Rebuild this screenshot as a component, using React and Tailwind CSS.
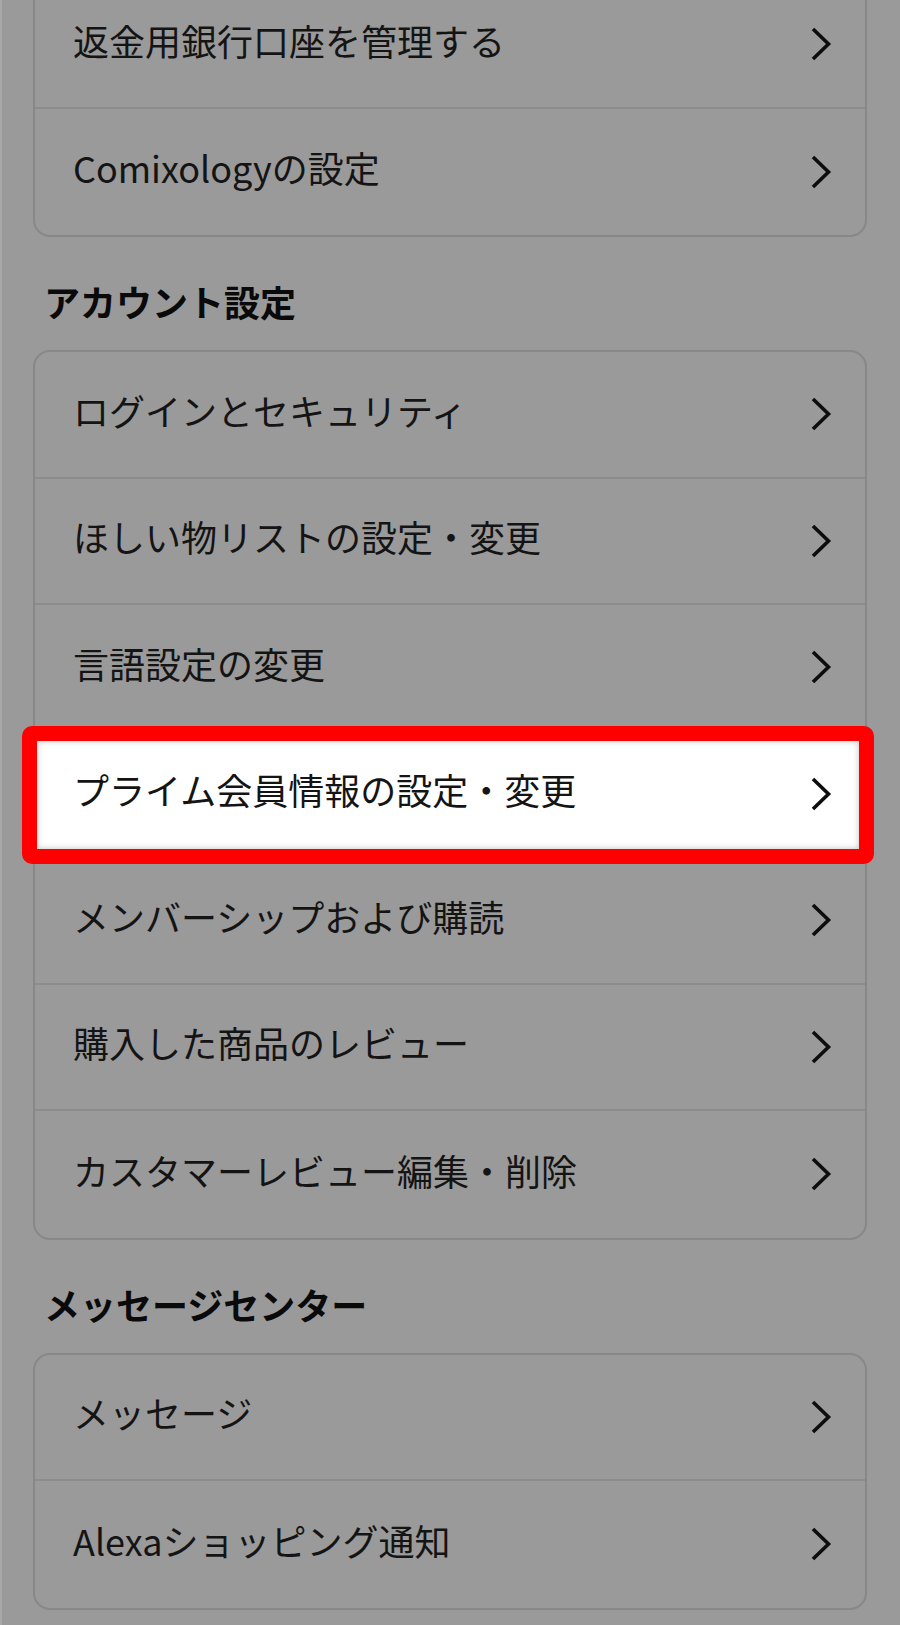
const font = { fontFamily: '"Noto Sans CJK JP", "Noto Sans", sans-serif' };

function Chevron() {
  return (
    <svg width="24" height="38" viewBox="0 0 24 38" className="text-[#0d0d0d]">
      <polyline
        points="4,4 19.5,19 4,34"
        fill="none"
        stroke="currentColor"
        strokeWidth="3.6"
        strokeLinejoin="miter"
      />
    </svg>
  );
}

function Row({ label, last, highlight }) {
  return (
    <div
      className={`relative flex items-center justify-between h-[126.5px] pl-[38px] pr-[32px] ${
        last ? "" : "border-b-2 border-[#8c8c8c]"
      } ${highlight ? "bg-white" : ""}`}
    >
      <span className="mb-[9px] text-[36px] leading-[36px] text-[#141414]">{label}</span>
      <Chevron />
      {highlight && (
        <div className="absolute -top-[6px] -bottom-[8px] -left-[13px] -right-[9px] rounded-[10px] border-[15px] border-[#ff0000] shadow-[inset_0_0_6px_rgba(0,0,0,0.25)]" />
      )}
    </div>
  );
}

function Card({ items, highlightIndex, className = "" }) {
  return (
    <div className={`border-2 border-[#888888] rounded-[17px] ${className}`}>
      {items.map((item, i) => (
        <Row
          key={item}
          label={item}
          last={i === items.length - 1}
          highlight={i === highlightIndex}
        />
      ))}
    </div>
  );
}

function Heading({ children }) {
  return (
    <h2 className="pl-[11px] pt-[46px] pb-[31px] text-[36px] leading-[36px] font-bold text-[#0a0a0a]">
      {children}
    </h2>
  );
}

export default function App() {
  return (
    <div
      className="w-[900px] h-[1625px] overflow-hidden bg-[#9a9a9a] border-l-2 border-[#a8a8a8] pl-[31px] pr-[33px]"
      style={font}
    >
      <Card
        className="-mt-[20px] rounded-t-none"
        items={["返金用銀行口座を管理する", "Comixologyの設定"]}
      />

      <Heading>アカウント設定</Heading>
      <Card
        items={[
          "ログインとセキュリティ",
          "ほしい物リストの設定・変更",
          "言語設定の変更",
          "プライム会員情報の設定・変更",
          "メンバーシップおよび購読",
          "購入した商品のレビュー",
          "カスタマーレビュー編集・削除",
        ]}
        highlightIndex={3}
      />

      <Heading>メッセージセンター</Heading>
      <Card items={["メッセージ", "Alexaショッピング通知"]} />
    </div>
  );
}
